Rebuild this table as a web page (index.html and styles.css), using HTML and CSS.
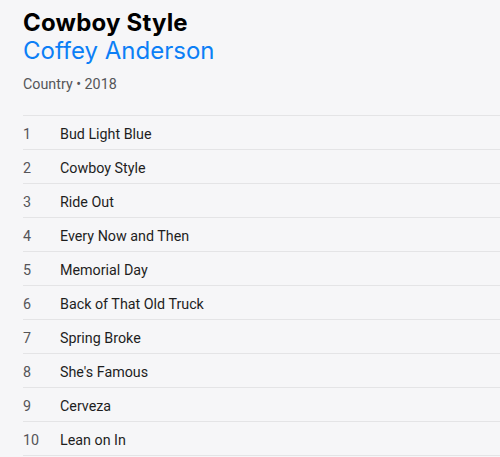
FILE: index.html
```html
<!DOCTYPE html>
<html>
<head>
<meta charset="utf-8">
<link rel="stylesheet" href="styles.css">
</head>
<body>
<div class="album">
  <header class="album-head">
    <h1 class="title">Cowboy Style</h1>
    <h2 class="artist">Coffey Anderson</h2>
    <p class="meta">Country • 2018</p>
  </header>
  <ol class="tracks">
    <li class="track"><span class="num">1</span><span class="name">Bud Light Blue</span></li>
    <li class="track"><span class="num">2</span><span class="name">Cowboy Style</span></li>
    <li class="track"><span class="num">3</span><span class="name">Ride Out</span></li>
    <li class="track"><span class="num">4</span><span class="name">Every Now and Then</span></li>
    <li class="track"><span class="num">5</span><span class="name">Memorial Day</span></li>
    <li class="track"><span class="num">6</span><span class="name">Back of That Old Truck</span></li>
    <li class="track"><span class="num">7</span><span class="name">Spring Broke</span></li>
    <li class="track"><span class="num">8</span><span class="name">She's Famous</span></li>
    <li class="track"><span class="num">9</span><span class="name">Cerveza</span></li>
    <li class="track"><span class="num">10</span><span class="name">Lean on In</span></li>
  </ol>
</div>
</body>
</html>
```
FILE: styles.css
```css
html, body {
  margin: 0;
  padding: 0;
  background: #f6f6f8;
  overflow: hidden;
}
body {
  font-family: Roboto, "Noto Sans", sans-serif;
  color: #1e1e1e;
}
.album {
  padding: 8px 0 0 23px;
}
.title {
  margin: 0;
  font-family: Inter, "Noto Sans", sans-serif;
  font-size: 24px;
  line-height: 29px;
  font-weight: 700;
  letter-spacing: 0.2px;
  color: #000;
}
.artist {
  margin: 0;
  font-family: Inter, "Noto Sans", sans-serif;
  font-size: 24px;
  line-height: 28px;
  font-weight: 400;
  color: #0c7ff6;
}
.meta {
  margin: 9px 0 0;
  font-size: 14.3px;
  line-height: 20px;
  color: #555558;
}
.tracks {
  list-style: none;
  margin: 21px 0 0;
  padding: 0;
  border-top: 1px solid #e4e4e6;
}
.track {
  display: flex;
  align-items: center;
  box-sizing: border-box;
  height: 34px;
  padding-top: 2px;
  border-bottom: 1px solid #e4e4e6;
  font-size: 14.3px;
  line-height: 20px;
}
.num {
  width: 37px;
  color: #555558;
}
.name {
  color: #1e1e1e;
}
```
